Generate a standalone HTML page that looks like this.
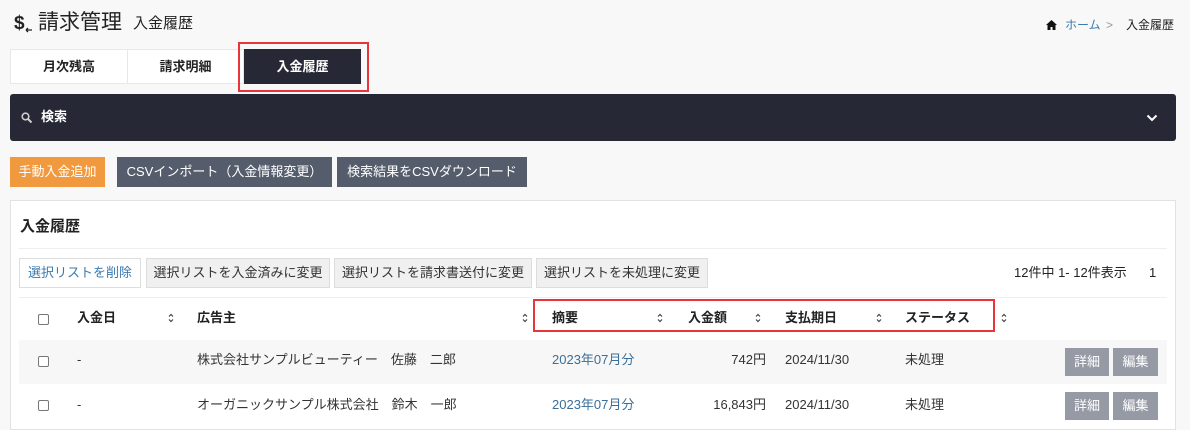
<!DOCTYPE html>
<html><head><meta charset="utf-8"><style>
*{box-sizing:border-box;margin:0;padding:0}
body{width:1190px;height:422px;overflow:hidden;background:#f8f8f8;font-family:"Liberation Sans","Noto Sans CJK JP",sans-serif;color:#333;font-size:13px;position:relative;line-height:16px}
.a{position:absolute;white-space:nowrap}
.tab{position:absolute;top:49px;height:35px;background:#fff;border:1px solid #e8e8e8;font-weight:bold;font-size:13px;text-align:center;line-height:33px;color:#222}
.btn{position:absolute;top:157px;height:30px;line-height:29px;color:#fff;text-align:center;font-size:13px}
.gb{position:absolute;top:258px;height:30px;line-height:28px;border:1px solid #ddd;background:#f0f0f0;font-size:13px;text-align:center;color:#333}
.th{position:absolute;top:310px;font-weight:bold;font-size:13px;color:#222;line-height:16px}
.so{position:absolute;top:312px;width:8px;height:12px}
.cb{position:absolute;width:11px;height:11px;border:1px solid #777;border-radius:2px;background:#fff}
.td{position:absolute;font-size:13px;color:#333;line-height:16px}
.sb{position:absolute;height:28px;width:44px;background:#959aa5;color:#fff;text-align:center;line-height:28px;font-size:13px}
</style></head><body>
<svg width="0" height="0" style="position:absolute"><defs><symbol id="s" viewBox="0 0 8 12"><path d="M2 4.5L4 2.5 6 4.5M2 7.5L4 9.5 6 7.5" stroke="#444" stroke-width="1.2" fill="none"/></symbol></defs></svg>
<svg class="a" style="left:14px;top:12px" width="20" height="22" viewBox="0 0 20 22"><text x="0" y="17" font-size="19" font-weight="bold" fill="#222" font-family="Liberation Sans">$</text><path d="M12 18h6M12 18l2-2M12 18l2 2" stroke="#222" stroke-width="1.3" fill="none"/></svg>
<div class="a" style="left:38px;top:10px;font-size:21px;line-height:26px;color:#222">請求管理</div>
<div class="a" style="left:133px;top:14px;font-size:15px;line-height:20px;color:#222">入金履歴</div>
<svg class="a" style="left:1046px;top:20px" width="11" height="10" viewBox="0 0 11 10"><path d="M5.5 0L0 5h1.5v5h3V7h2v3h3V5H11z" fill="#111"/></svg>
<div class="a" style="left:1065px;top:17px;font-size:12px;color:#3a7ab0">ホーム</div>
<div class="a" style="left:1106px;top:17px;font-size:12px;color:#999">&gt;</div>
<div class="a" style="left:1126px;top:17px;font-size:12px;color:#222">入金履歴</div>
<div class="tab" style="left:10px;width:118px">月次残高</div>
<div class="tab" style="left:127px;width:117px">請求明細</div>
<div class="tab" style="left:244px;top:49px;width:117px;background:#272835;border-color:#272835;color:#fff">入金履歴</div>
<div class="a" style="left:238px;top:42px;width:131px;height:50px;border:2px solid #e8343a"></div>
<div class="a" style="left:10px;top:94px;width:1166px;height:47px;background:#272835;border-radius:3px"></div>
<svg class="a" style="left:21px;top:112px" width="12" height="12" viewBox="0 0 12 12"><circle cx="4.5" cy="4.5" r="3.3" stroke="#ccc" stroke-width="1.6" fill="none"/><path d="M7 7l3.5 3.5" stroke="#ccc" stroke-width="2"/></svg>
<div class="a" style="left:41px;top:109px;font-size:13px;font-weight:bold;color:#fff">検索</div>
<svg class="a" style="left:1146px;top:114px" width="12" height="8" viewBox="0 0 12 8"><path d="M1.5 1.5l4.5 4.5 4.5-4.5" stroke="#fff" stroke-width="2" fill="none"/></svg>
<div class="btn" style="left:10px;width:95px;background:#f0993f">手動入金追加</div>
<div class="btn" style="left:117px;width:215px;background:#555d6c">CSVインポート（入金情報変更）</div>
<div class="btn" style="left:337px;width:190px;background:#555d6c">検索結果をCSVダウンロード</div>
<div class="a" style="left:10px;top:200px;width:1166px;height:230px;background:#fff;border:1px solid #e2e2e2"></div>
<div class="a" style="left:20px;top:217px;font-size:15px;line-height:20px;font-weight:bold;color:#222">入金履歴</div>
<div class="a" style="left:19px;top:248px;width:1148px;height:1px;background:#eee"></div>
<div class="gb" style="left:19px;width:122px;background:#fff;color:#3a7ab0">選択リストを削除</div>
<div class="gb" style="left:146px;width:184px">選択リストを入金済みに変更</div>
<div class="gb" style="left:334px;width:198px">選択リストを請求書送付に変更</div>
<div class="gb" style="left:536px;width:172px">選択リストを未処理に変更</div>
<div class="a" style="left:1014px;top:265px;font-size:13px;color:#222">12件中 1- 12件表示</div>
<div class="a" style="left:1149px;top:265px;font-size:13px;color:#222">1</div>
<div class="a" style="left:19px;top:297px;width:1148px;height:1px;background:#eee"></div>
<div class="cb" style="left:38px;top:314px"></div>
<div class="th" style="left:77px">入金日</div><svg class="so" style="left:167px"><use href="#s"/></svg>
<div class="th" style="left:197px">広告主</div><svg class="so" style="left:521px"><use href="#s"/></svg>
<div class="th" style="left:552px">摘要</div><svg class="so" style="left:656px"><use href="#s"/></svg>
<div class="th" style="left:688px">入金額</div><svg class="so" style="left:754px"><use href="#s"/></svg>
<div class="th" style="left:785px">支払期日</div><svg class="so" style="left:875px"><use href="#s"/></svg>
<div class="th" style="left:905px">ステータス</div><svg class="so" style="left:1000px"><use href="#s"/></svg>
<div class="a" style="left:533px;top:299px;width:462px;height:33px;border:2px solid #e8343a"></div>
<div class="a" style="left:19px;top:340px;width:1148px;height:44px;background:#f7f7f7"></div>
<div class="cb" style="left:38px;top:356px"></div>
<div class="td" style="left:77px;top:352px">-</div>
<div class="td" style="left:197px;top:352px">株式会社サンプルビューティー　佐藤　二郎</div>
<div class="td" style="left:552px;top:352px;color:#3a6f9a">2023年07月分</div>
<div class="td" style="left:700px;top:352px;width:66px;text-align:right">742円</div>
<div class="td" style="left:785px;top:352px">2024/11/30</div>
<div class="td" style="left:905px;top:352px">未処理</div>
<div class="sb" style="left:1065px;top:348px">詳細</div><div class="sb" style="left:1113px;top:348px;width:45px">編集</div>
<div class="cb" style="left:38px;top:400px"></div>
<div class="td" style="left:77px;top:397px">-</div>
<div class="td" style="left:197px;top:397px">オーガニックサンプル株式会社　鈴木　一郎</div>
<div class="td" style="left:552px;top:397px;color:#3a6f9a">2023年07月分</div>
<div class="td" style="left:690px;top:397px;width:76px;text-align:right">16,843円</div>
<div class="td" style="left:785px;top:397px">2024/11/30</div>
<div class="td" style="left:905px;top:397px">未処理</div>
<div class="sb" style="left:1065px;top:392px">詳細</div><div class="sb" style="left:1113px;top:392px;width:45px">編集</div>
</body></html>
